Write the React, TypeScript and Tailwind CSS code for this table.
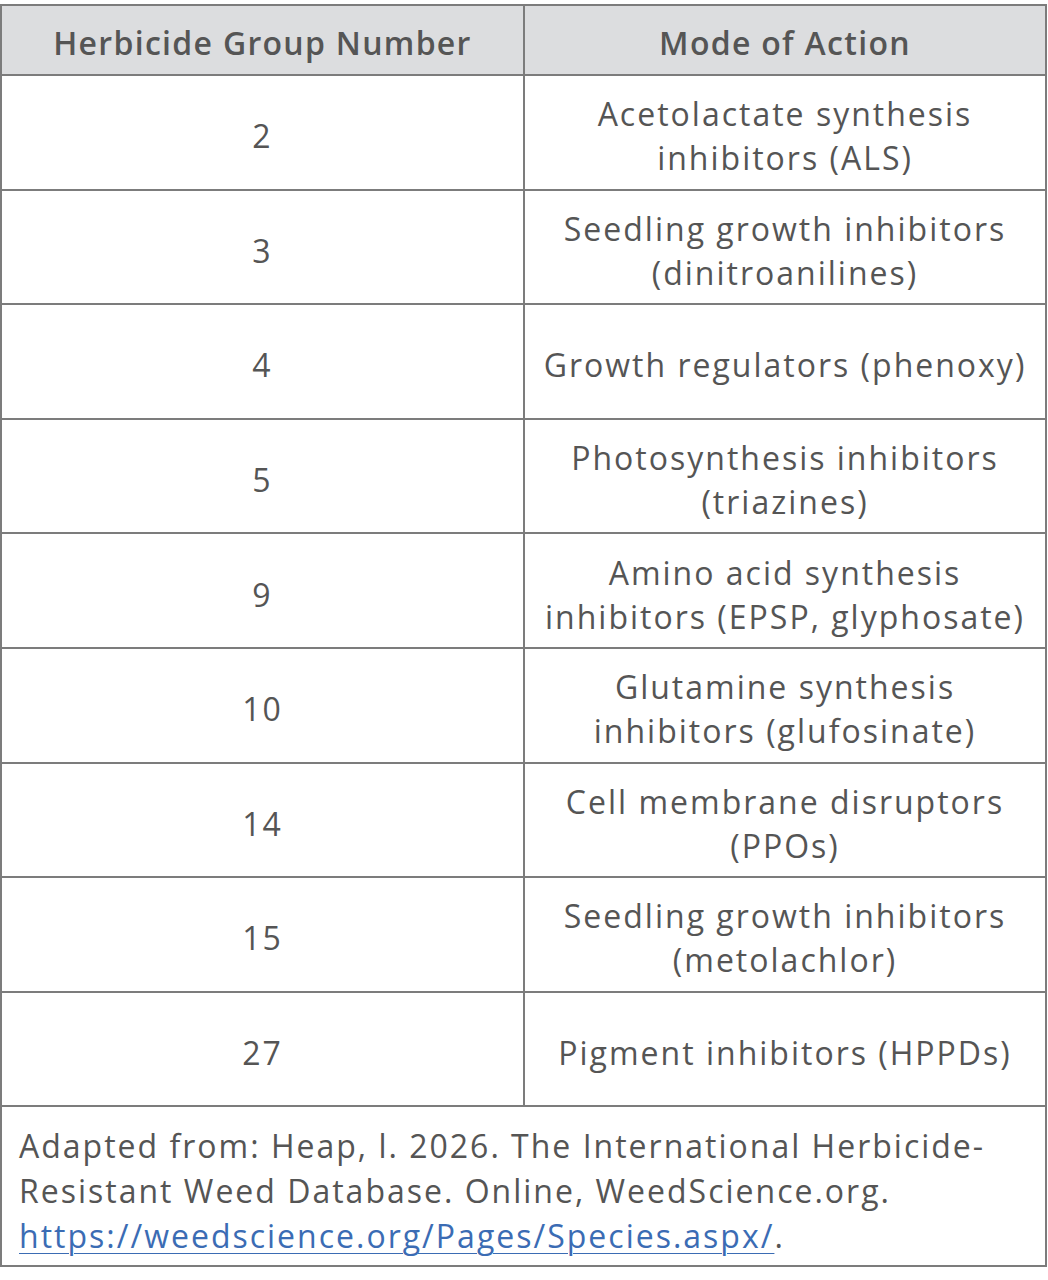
const rows: { group: string; mode: string[] }[] = [
  { group: "2", mode: ["Acetolactate synthesis", "inhibitors (ALS)"] },
  { group: "3", mode: ["Seedling growth inhibitors", "(dinitroanilines)"] },
  { group: "4", mode: ["Growth regulators (phenoxy)"] },
  { group: "5", mode: ["Photosynthesis inhibitors", "(triazines)"] },
  { group: "9", mode: ["Amino acid synthesis", "inhibitors (EPSP, glyphosate)"] },
  { group: "10", mode: ["Glutamine synthesis", "inhibitors (glufosinate)"] },
  { group: "14", mode: ["Cell membrane disruptors", "(PPOs)"] },
  { group: "15", mode: ["Seedling growth inhibitors", "(metolachlor)"] },
  { group: "27", mode: ["Pigment inhibitors (HPPDs)"] },
];

export default function App() {
  return (
    <div className="bg-white pt-[4px] w-[1048px] font-['Open_Sans',sans-serif] text-[#555555] tracking-[2px]">
      <table className="w-[1047px] border-collapse border-2 border-[#7c7c7c] table-fixed">
        <thead>
          <tr className="h-[70px] bg-[#dcdddf]">
            <th className="w-[523px] border-2 border-[#7c7c7c] pt-[6px] text-[32px] font-semibold tracking-[1.3px] text-center">
              Herbicide Group Number
            </th>
            <th className="border-2 border-[#7c7c7c] pt-[6px] text-[32px] font-semibold tracking-[1.3px] text-center">
              Mode of Action
            </th>
          </tr>
        </thead>
        <tbody>
          {rows.map((r) => (
            <tr key={r.group} className="h-[114.6px]">
              <td className="border-2 border-[#7c7c7c] pt-[8px] text-center text-[32px]">{r.group}</td>
              <td className="border-2 border-[#7c7c7c] pt-[8px] text-center text-[32px] leading-[44px]">
                {r.mode.map((line) => (
                  <div key={line}>{line}</div>
                ))}
              </td>
            </tr>
          ))}
        </tbody>
        <tfoot>
          <tr className="h-[160px]">
            <td colSpan={2} className="border-2 border-[#7c7c7c] px-[17px] pt-[16px] pb-[6px] align-top text-[32px] leading-[45px]">
              Adapted from: Heap, l. 2026. The International Herbicide-Resistant Weed Database. Online,
              WeedScience.org.{" "}
              <a href="#" className="text-[#3b6cb4] underline underline-offset-[5px] decoration-1">
                https://weedscience.org/Pages/Species.aspx/
              </a>
              .
            </td>
          </tr>
        </tfoot>
      </table>
    </div>
  );
}
